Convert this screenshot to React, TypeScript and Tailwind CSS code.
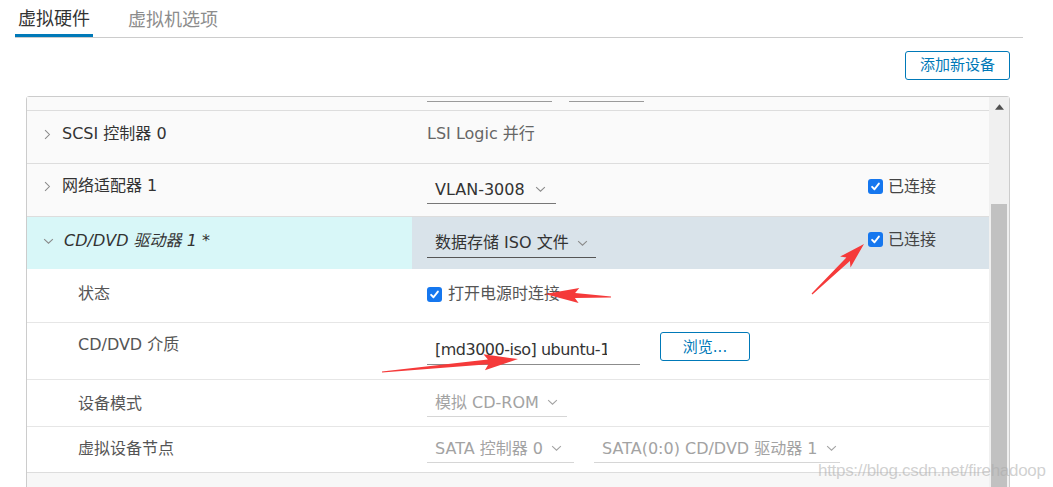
import React from "react";

type Pt = [number, number];

function arrowPoints(tail: Pt, tip: Pt, headLen: number, headW: number, w0: number, w1: number): string {
  const dx = tip[0] - tail[0];
  const dy = tip[1] - tail[1];
  const len = Math.hypot(dx, dy);
  const ux = dx / len;
  const uy = dy / len;
  const nx = -uy;
  const ny = ux;
  const bx = tip[0] - ux * headLen;
  const by = tip[1] - uy * headLen;
  const barbX = bx - ux * 4;
  const barbY = by - uy * 4;
  const pts: Pt[] = [
    [tail[0] + (nx * w0) / 2, tail[1] + (ny * w0) / 2],
    [bx + (nx * w1) / 2, by + (ny * w1) / 2],
    [barbX + (nx * headW) / 2, barbY + (ny * headW) / 2],
    [tip[0], tip[1]],
    [barbX - (nx * headW) / 2, barbY - (ny * headW) / 2],
    [bx - (nx * w1) / 2, by - (ny * w1) / 2],
    [tail[0] - (nx * w0) / 2, tail[1] - (ny * w0) / 2],
  ];
  return pts.map((p) => `${p[0].toFixed(1)},${p[1].toFixed(1)}`).join(" ");
}

function Check() {
  return (
    <span className="inline-flex h-[15px] w-[15px] shrink-0 items-center justify-center rounded-[3px] bg-[#1577ef]">
      <svg viewBox="0 0 12 12" className="h-[11px] w-[11px]">
        <path d="M2.3 6.4 L4.9 9 L9.7 2.8" stroke="white" strokeWidth="2.1" fill="none" strokeLinecap="round" strokeLinejoin="round" />
      </svg>
    </span>
  );
}

function ChevDown({ color = "#8a8a8a" }: { color?: string }) {
  return (
    <svg viewBox="0 0 12 8" className="h-[7px] w-[11px] shrink-0">
      <path d="M1 1.2 L6 6 L11 1.2" stroke={color} strokeWidth="1.2" fill="none" />
    </svg>
  );
}

function ChevRight() {
  return (
    <svg viewBox="0 0 8 12" className="mt-[5px] h-[11px] w-[7px] shrink-0">
      <path d="M1.2 1 L6.2 6 L1.2 11" stroke="#8a8a8a" strokeWidth="1.2" fill="none" />
    </svg>
  );
}

function ChevDownRow() {
  return (
    <svg viewBox="0 0 12 8" className="mt-[7px] h-[7px] w-[11px] shrink-0">
      <path d="M1 1.2 L6 6 L11 1.2" stroke="#8a8a8a" strokeWidth="1.2" fill="none" />
    </svg>
  );
}

export default function App() {
  const font = "font-['DejaVu_Sans','Noto_Sans_CJK_SC',sans-serif]";
  return (
    <div className={`relative h-[487px] w-[1053px] overflow-hidden bg-white ${font}`}>
      {/* Tabs */}
      <div className="mx-[15px] mr-[30px] flex h-[38px] border-b border-[#cccccc]">
        <div className="flex h-[37px] items-center border-b-[3px] border-[#0079b8] px-[3px] pt-[2px] text-[18px] text-[#333333]">
          虚拟硬件
        </div>
        <div className="ml-[32px] flex h-[37px] items-center px-[3px] pt-[2px] text-[18px] text-[#8c8c8c]">
          虚拟机选项
        </div>
      </div>

      {/* Add device button */}
      <div className="mr-[43px] mt-[13px] flex justify-end">
        <div className="flex h-[29px] w-[105px] items-center justify-center rounded-[3px] border border-[#0079b8] text-[15px] text-[#0079b8]">
          添加新设备
        </div>
      </div>

      {/* Panel */}
      <div className="ml-[26px] mr-[43px] mt-[16px] flex h-[420px] rounded-t-[3px] border border-[#cccccc]">
        <div className="min-w-0 flex-1">
          {/* partial top row */}
          <div className="grid h-[14px] grid-cols-[385px_441px_1fr] border-b border-[#dddddd] bg-[#fafafa]">
            <div />
            <div className="flex pl-[15px] pt-[4px]">
              <div className="h-px w-[125px] bg-[#9a9a9a]" />
              <div className="ml-[17px] h-px w-[75px] bg-[#9a9a9a]" />
            </div>
            <div />
          </div>

          {/* SCSI */}
          <div className="grid h-[53px] grid-cols-[385px_441px_1fr] border-b border-[#dddddd] bg-[#fafafa] text-[16px] leading-[20px]">
            <div className="flex items-start gap-[11px] pl-[17px] pt-[13px] text-[#333333]">
              <ChevRight />
              <span>SCSI 控制器 0</span>
            </div>
            <div className="pl-[15px] pt-[13px] text-[#666666]">LSI Logic 并行</div>
            <div />
          </div>

          {/* Network */}
          <div className="grid h-[53px] grid-cols-[385px_441px_1fr] border-b border-[#dddddd] bg-[#fafafa] text-[16px] leading-[20px]">
            <div className="flex items-start gap-[11px] pl-[17px] pt-[12px] text-[#333333]">
              <ChevRight />
              <span>网络适配器 1</span>
            </div>
            <div className="pl-[15px] pt-[12px]">
              <div className="flex h-[28px] w-[129px] items-center gap-[10px] border-b border-[#777777] pl-[8px] text-[#333333]">
                <span>VLAN-3008</span>
                <ChevDown />
              </div>
            </div>
            <div className="flex items-start gap-[5px] pl-[15px] pt-[13px]">
              <div className="flex h-[18px] items-center">
                <Check />
              </div>
              <span className="text-[#444444]">已连接</span>
            </div>
          </div>

          {/* CD/DVD expanded */}
          <div className="grid h-[52px] grid-cols-[385px_441px_1fr] text-[16px] leading-[20px]">
            <div className="flex items-start gap-[10px] bg-[#d8f7f8] pl-[16px] pt-[14px] italic text-[#333333]">
              <ChevDownRow />
              <span>CD/DVD 驱动器 1 *</span>
            </div>
            <div className="bg-[#d9e3ea] pl-[15px] pt-[12px]">
              <div className="flex h-[29px] w-[169px] items-center gap-[8px] border-b border-[#555555] pl-[8px] text-[#333333]">
                <span className="whitespace-nowrap">数据存储 ISO 文件</span>
                <ChevDown />
              </div>
            </div>
            <div className="flex items-start gap-[5px] bg-[#d9e3ea] pl-[15px] pt-[13px]">
              <div className="flex h-[18px] items-center">
                <Check />
              </div>
              <span className="text-[#444444]">已连接</span>
            </div>
          </div>

          {/* 状态 */}
          <div className="grid h-[54px] grid-cols-[385px_441px_1fr] border-b border-[#e6e6e6] bg-white text-[16px] leading-[20px]">
            <div className="pl-[51px] pt-[15px] text-[#555555]">状态</div>
            <div className="flex items-start gap-[6px] pl-[15px] pt-[15px]">
              <div className="flex h-[20px] items-center">
                <Check />
              </div>
              <span className="text-[#555555]">打开电源时连接</span>
            </div>
            <div />
          </div>

          {/* 介质 */}
          <div className="grid h-[57px] grid-cols-[385px_441px_1fr] border-b border-[#e6e6e6] bg-white text-[16px] leading-[20px]">
            <div className="pl-[51px] pt-[12px] text-[#555555]">CD/DVD 介质</div>
            <div className="flex items-start pl-[15px]">
              <div className="mt-[13px] flex h-[29px] w-[213px] items-center overflow-hidden whitespace-nowrap border-b border-[#8c8c8c] pl-[8px] pr-[33px] text-[#333333]">
                <span className="overflow-hidden tracking-[-0.5px]">[md3000-iso] ubuntu-18.04.2-live-server-amd64.iso</span>
              </div>
              <div className="ml-[20px] mt-[9px] flex h-[29px] w-[90px] items-center justify-center rounded-[3px] border border-[#0079b8] text-[15px] text-[#0079b8]">
                浏览...
              </div>
            </div>
            <div />
          </div>

          {/* 设备模式 */}
          <div className="grid h-[47px] grid-cols-[385px_441px_1fr] border-b border-[#e6e6e6] bg-white text-[16px] leading-[20px]">
            <div className="pl-[51px] pt-[14px] text-[#555555]">设备模式</div>
            <div className="pl-[15px] pt-[9px]">
              <div className="flex h-[28px] w-[140px] items-center gap-[8px] border-b border-[#d6d6d6] pl-[8px] text-[#a3a3a3]">
                <span className="whitespace-nowrap">模拟 CD-ROM</span>
                <ChevDown color="#a3a3a3" />
              </div>
            </div>
            <div />
          </div>

          {/* 虚拟设备节点 */}
          <div className="grid h-[46px] grid-cols-[385px_1fr] border-b border-[#dddddd] bg-white text-[16px] leading-[20px]">
            <div className="pl-[51px] pt-[12px] text-[#555555]">虚拟设备节点</div>
            <div className="flex gap-[20px] pl-[15px] pt-[8px]">
              <div className="flex h-[28px] w-[147px] items-center gap-[8px] border-b border-[#d6d6d6] pl-[8px] text-[#a3a3a3]">
                <span className="whitespace-nowrap">SATA 控制器 0</span>
                <ChevDown color="#a3a3a3" />
              </div>
              <div className="flex h-[28px] w-[246px] items-center gap-[8px] border-b border-[#d6d6d6] pl-[8px] text-[#a3a3a3]">
                <span className="whitespace-nowrap">SATA(0:0) CD/DVD 驱动器 1</span>
                <ChevDown color="#a3a3a3" />
              </div>
            </div>
          </div>

          <div className="h-[60px] bg-[#f7f7f7]" />
        </div>

        {/* Scrollbar */}
        <div className="flex w-[20px] flex-col bg-[#f0f0f0]">
          <div className="flex h-[107px] justify-center pt-[7px]">
            <svg viewBox="0 0 10 6" className="h-[6px] w-[9px]">
              <path d="M0 6 L5 0 L10 6 Z" fill="#505050" />
            </svg>
          </div>
          <div className="mx-auto w-[16px] flex-1 bg-[#c1c1c1]" />
        </div>
      </div>

      {/* Watermark */}
      <div className="pointer-events-none absolute left-[818px] top-[458px] font-['Liberation_Sans',sans-serif] text-[17px] tracking-[-0.3px] text-[rgba(170,170,170,0.55)]">
        https://blog.csdn.net/firehadoop
      </div>

      {/* Red annotation arrows */}
      <svg className="pointer-events-none absolute left-0 top-0 h-[487px] w-[1053px]" viewBox="0 0 1053 487">
        <polygon points={arrowPoints([812, 294], [864, 244], 22, 15, 1.2, 5)} fill="#f53a3a" />
        <polygon points={arrowPoints([611, 297], [545, 294], 30, 15, 1.2, 5)} fill="#f53a3a" />
        <polygon points={arrowPoints([382, 372], [518, 359], 30, 16, 1.2, 5)} fill="#f53a3a" />
      </svg>
    </div>
  );
}
